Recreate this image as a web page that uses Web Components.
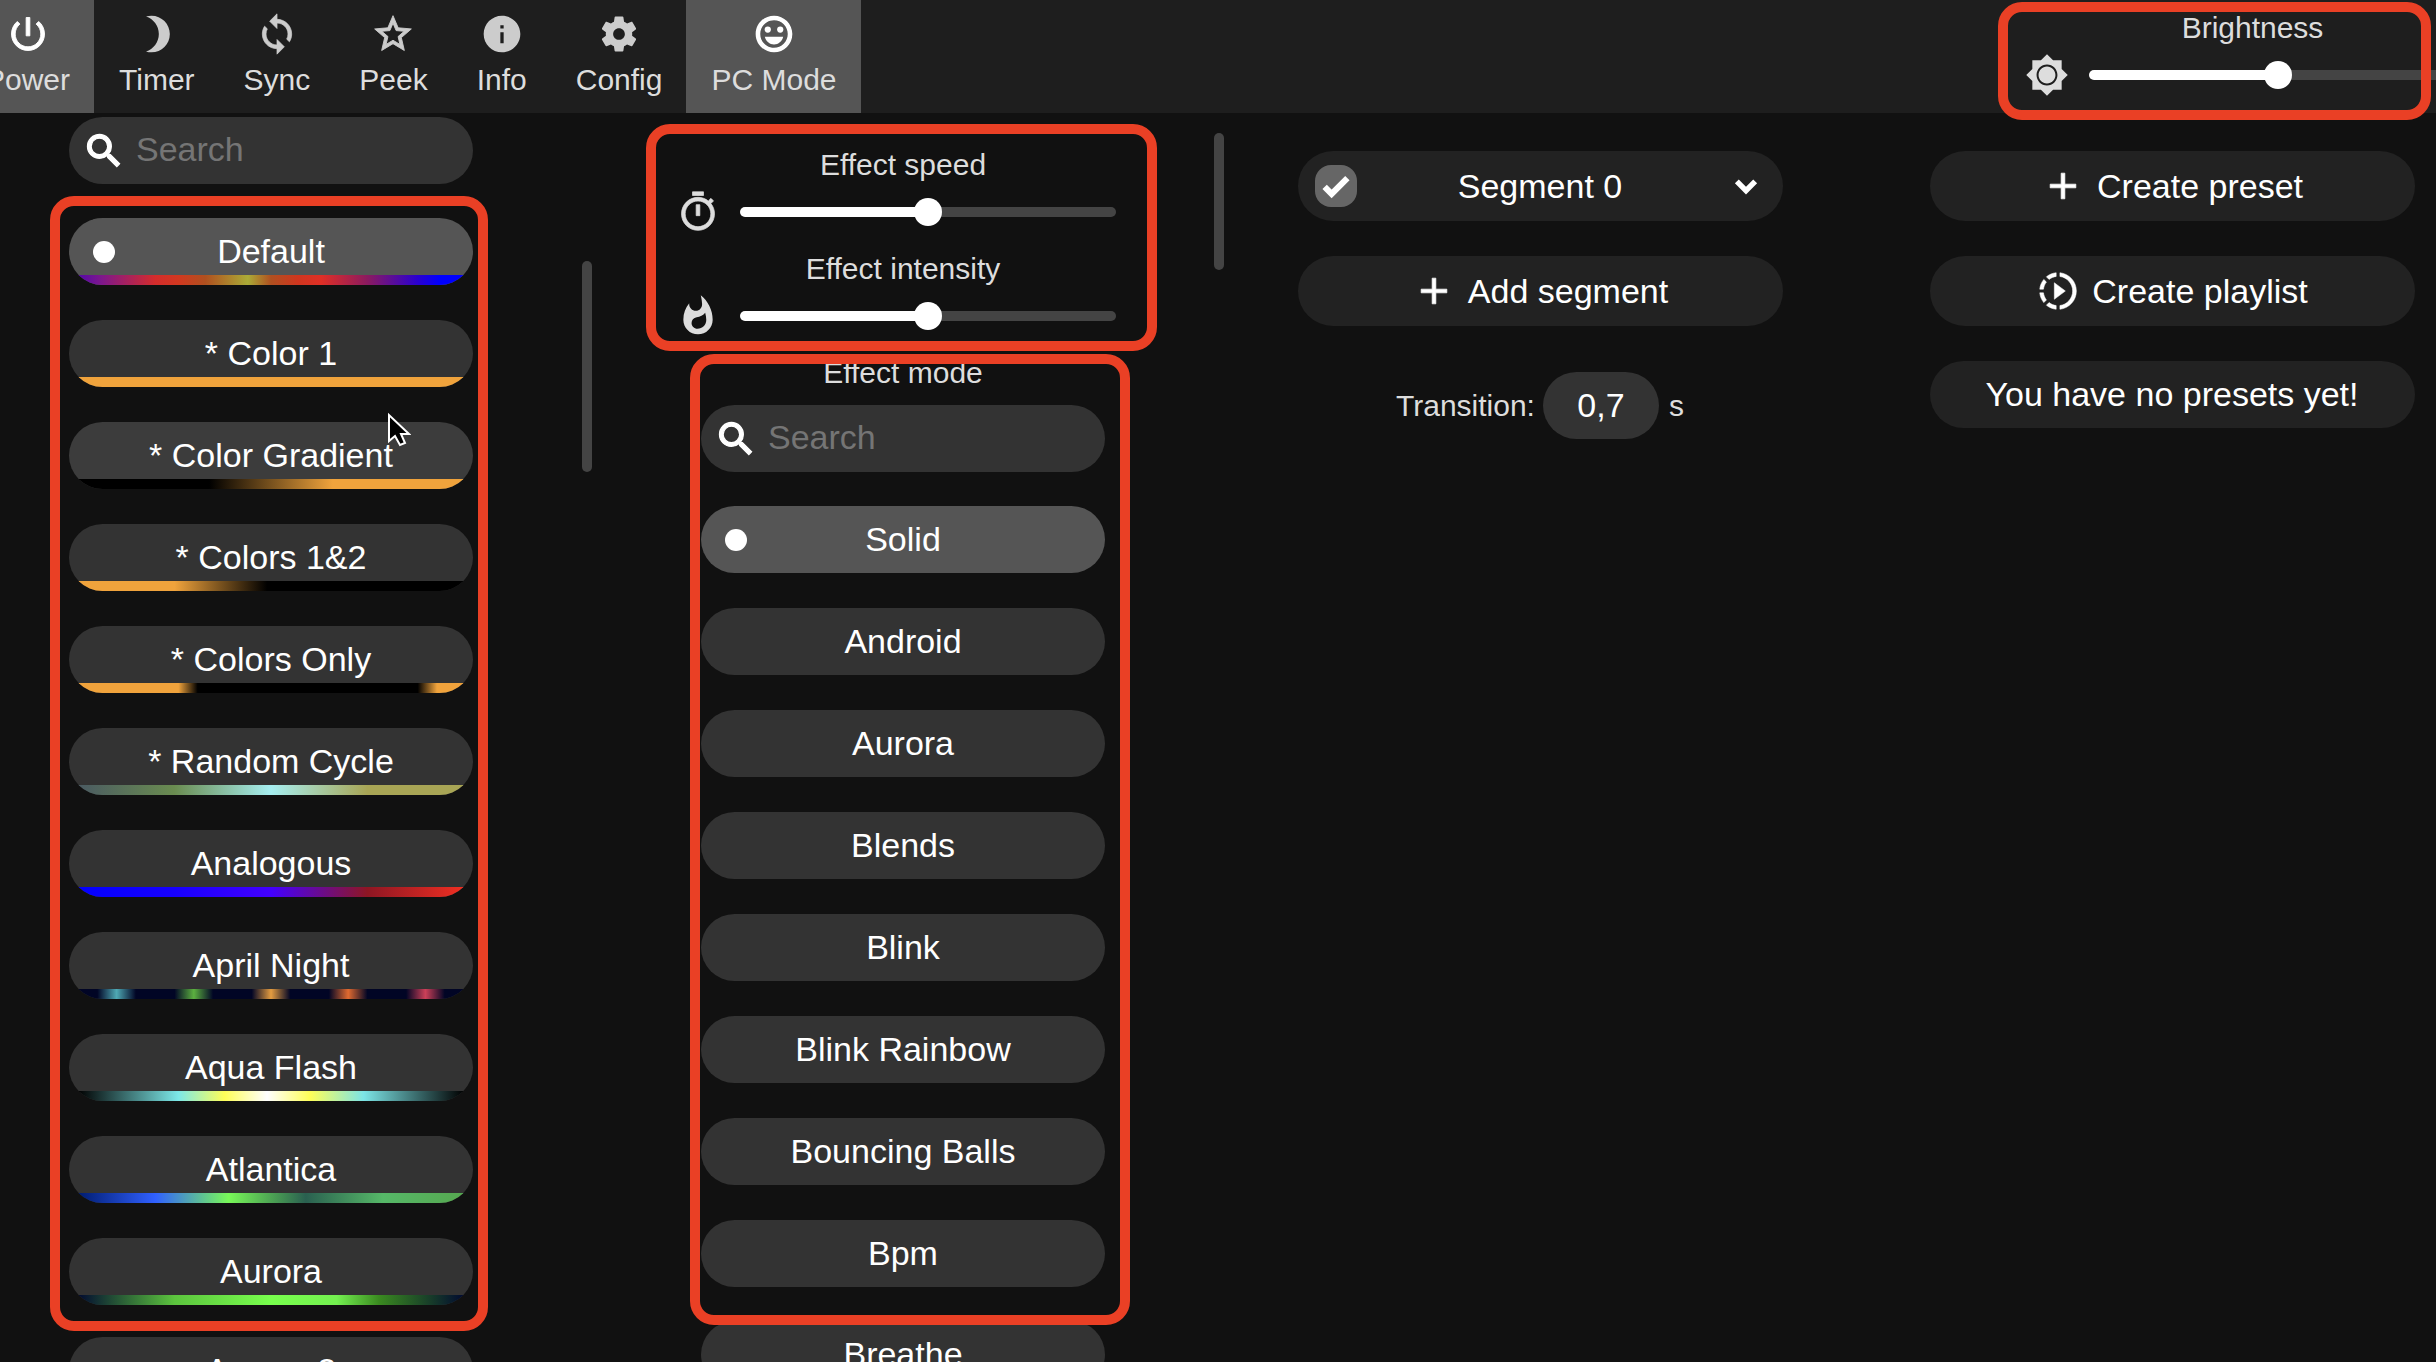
<!DOCTYPE html>
<html lang="en">
<head>
<meta charset="utf-8">
<title>WLED</title>
<style>
  html, body { height: 100%; }
  body {
    margin: 0;
    overflow: hidden;
    background: #111;
    color: #ddd;
    font: 30px/34px "Liberation Sans", Arial, sans-serif;
  }
</style>
</head>
<body>
<led-app></led-app>

<script>
const ICONS = {
  power: '<path d="M13 3h-2v10h2V3zm4.83 2.17l-1.42 1.42C17.99 7.86 19 9.81 19 12c0 3.87-3.13 7-7 7s-7-3.13-7-7c0-2.19 1.01-4.14 2.58-5.42L6.17 5.17C4.23 6.82 3 9.26 3 12c0 4.97 4.03 9 9 9s9-4.03 9-9c0-2.74-1.23-5.18-3.17-6.83z" stroke="currentColor" stroke-width=".5"/>',
  timer: '<path d="M9 2c-1.05 0-2.05.16-3 .46 4.06 1.27 7 5.06 7 9.54 0 4.48-2.94 8.27-7 9.54.95.3 1.95.46 3 .46 5.52 0 10-4.48 10-10S14.52 2 9 2z"/>',
  sync: '<path d="M12 4V1L8 5l4 4V6c3.31 0 6 2.69 6 6 0 1.01-.25 1.97-.7 2.8l1.46 1.46C19.54 15.03 20 13.57 20 12c0-4.42-3.58-8-8-8zm0 14c-3.31 0-6-2.69-6-6 0-1.01.25-1.97.7-2.8L5.24 7.74C4.46 8.97 4 10.43 4 12c0 4.42 3.58 8 8 8v3l4-4-4-4v3z" stroke="currentColor" stroke-width=".4"/>',
  peek: '<path d="M22 9.24l-7.19-.62L12 2 9.19 8.63 2 9.24l5.46 4.73L5.82 21 12 17.27 18.18 21l-1.63-7.03L22 9.24zM12 15.4l-3.76 2.27 1-4.28-3.32-2.88 4.38-.38L12 6.1l1.71 4.04 4.38.38-3.32 2.88 1 4.28L12 15.4z" stroke="currentColor" stroke-width=".5"/>',
  info: '<path d="M12 2C6.48 2 2 6.48 2 12s4.48 10 10 10 10-4.48 10-10S17.52 2 12 2zm.9 15h-1.800v-6h1.800v6zm0-8h-1.800V7.200h1.800V9z"/>',
  config: '<path d="M19.14 12.94c.04-.3.06-.61.06-.94 0-.32-.02-.64-.07-.94l2.03-1.58c.18-.14.23-.41.12-.61l-1.92-3.32c-.12-.22-.37-.29-.59-.22l-2.39.96c-.5-.38-1.03-.7-1.62-.94l-.36-2.54c-.04-.24-.24-.41-.48-.41h-3.84c-.24 0-.43.17-.47.41l-.36 2.54c-.59.24-1.13.57-1.62.94l-2.39-.96c-.22-.08-.47 0-.59.22L2.74 8.87c-.12.21-.08.47.12.61l2.03 1.58c-.05.3-.09.63-.09.94s.02.64.07.94l-2.03 1.58c-.18.14-.23.41-.12.61l1.92 3.32c.12.22.37.29.59.22l2.39-.96c.5.38 1.03.7 1.62.94l.36 2.54c.05.24.24.41.48.41h3.84c.24 0 .44-.17.47-.41l.36-2.54c.59-.24 1.13-.56 1.62-.94l2.39.96c.22.08.47 0 .59-.22l1.92-3.32c.12-.22.07-.47-.12-.61l-2.01-1.58zM12 15.2c-1.77 0-3.2-1.43-3.2-3.2s1.43-3.2 3.2-3.2 3.2 1.43 3.2 3.2-1.43 3.2-3.2 3.2z"/>',
  smile: '<path d="M12 2C6.47 2 2 6.47 2 12s4.47 10 10 10 10-4.48 10-10S17.52 2 12 2zm0 17.500c-4.140 0-7.500-3.360-7.500-7.500s3.360-7.500 7.500-7.500 7.500 3.360 7.500 7.500-3.360 7.500-7.500 7.500z"/><circle cx="15.400" cy="9.600" r="1.700"/><circle cx="8.600" cy="9.600" r="1.700"/><path d="M7 13.500h10c-.6 2.500-2.600 4.200-5 4.200s-4.400-1.700-5-4.200z"/>',
  brightness: '<path d="M20 8.69V4h-4.690L12 .69 8.690 4H4v4.690L.69 12 4 15.310V20h4.690L12 23.310 15.310 20H20v-4.690L23.310 12 20 8.690zM12 17.700c-3.150 0-5.700-2.550-5.700-5.700s2.550-5.700 5.700-5.700 5.700 2.550 5.700 5.700-2.550 5.700-5.700 5.700zm0-10.300c-2.540 0-4.600 2.060-4.600 4.600s2.060 4.600 4.600 4.600 4.600-2.060 4.600-4.600-2.060-4.600-4.600-4.600z"/>',
  speed: '<path d="M15 1H9v2h6V1zm-4 13h2V8h-2v6zm8.030-6.610l1.420-1.420c-.43-.51-.9-.99-1.410-1.410l-1.420 1.420C16.070 4.740 14.120 4 12 4c-4.970 0-9 4.030-9 9s4.020 9 9 9 9-4.030 9-9c0-2.120-.74-4.070-1.970-5.610zM12 20c-3.870 0-7-3.130-7-7s3.130-7 7-7 7 3.130 7 7-3.130 7-7 7z" stroke="currentColor" stroke-width=".4"/>',
  fire: '<path d="M13.500.67s.74 2.650.74 4.800c0 2.060-1.350 3.730-3.410 3.730-2.070 0-3.630-1.670-3.630-3.730l.03-.36C5.210 7.510 4 10.620 4 14c0 4.420 3.580 8 8 8s8-3.580 8-8C20 8.610 17.410 3.800 13.500.67zM11.710 19c-1.780 0-3.220-1.400-3.220-3.140 0-1.620 1.050-2.760 2.810-3.120 1.770-.36 3.600-1.210 4.620-2.580.39 1.290.59 2.650.59 4.040 0 2.650-2.150 4.800-4.800 4.800z"/>',
  search: '<path d="M15.500 14h-.79l-.28-.27C15.410 12.590 16 11.110 16 9.500 16 5.910 13.090 3 9.500 3S3 5.910 3 9.500 5.910 16 9.500 16c1.610 0 3.090-.59 4.230-1.570l.27.28v.79l5 4.990L20.490 19l-4.990-5zm-6 0C7.010 14 5 11.990 5 9.500S7.010 5 9.500 5 14 7.010 14 9.500 11.990 14 9.500 14z" stroke="currentColor" stroke-width=".7"/>',
  plus: '<path d="M19 13h-6v6h-2v-6H5v-2h6V5h2v6h6v2z" stroke="currentColor" stroke-width=".4"/>',
  playlist: '<path d="M13.050 9.790L10 7.500v9l3.050-2.290L16 12l-2.950-2.210zM11 4.070V2.050c-2.010.2-3.840 1-5.320 2.210L7.100 5.690c1.110-.86 2.440-1.440 3.900-1.620zM5.690 7.100L4.260 5.680C3.050 7.160 2.250 8.990 2.050 11h2.020c.18-1.460.76-2.790 1.620-3.900zM4.070 13H2.050c.2 2.010 1 3.840 2.210 5.320l1.430-1.430c-.86-1.100-1.440-2.430-1.620-3.890zm1.610 6.740C7.160 20.950 9 21.750 11 21.950v-2.020c-1.460-.18-2.790-.76-3.900-1.620l-1.420 1.430zM22 12c0 5.160-3.920 9.420-8.950 9.950v-2.020C16.970 19.410 20 16.050 20 12s-3.030-7.410-6.950-7.930V2.050C18.080 2.580 22 6.840 22 12z" stroke="currentColor" stroke-width=".3"/>',
  check: '<path d="M5.500 12.500l4 4L18.500 7.500" fill="none" stroke="currentColor" stroke-width="3.500"/>',
  chevron: '<path d="M7 9.500l5 5 5-5" fill="none" stroke="currentColor" stroke-width="3"/>'
};

const ORANGE = "#f0a33c";
const NIGHT = "#010525";

const PALETTES = [
  ["Default", "#5508a8, #7d178c 6%, #d42c2c 20%, #d23820 26%, #b0501f 33%, #abab37 44%, #b05020 50%, #d0361f 57%, #e02f26 63%, #8b1a60 75%, #2a00d0 88%, #00f 94%"],
  ["* Color 1", `${ORANGE}, ${ORANGE}`],
  ["* Color Gradient", `#000 34%, ${ORANGE} 66%`],
  ["* Colors 1&2", `${ORANGE} 25%, #000 49%`],
  ["* Colors Only", `${ORANGE} 26%, #000 31%, #000 88%, ${ORANGE} 93%`],
  ["* Random Cycle", "#4a5a62, #6a8c50 25%, #a6eef0 50%, #a8a555 75%"],
  ["Analogous", "#0300ff, #1700ff 25%, #4300ff 50%, #8e1623 75%, #f02f22"],
  ["April Night", ["#4fa9b4", "#5cb040", "#e49c40", "#e06a30", "#cc4058"].map((c, i) => {
    const p = 10 + i * 20;
    return `${NIGHT} ${p - 5}%, ${c} ${p}%, ${NIGHT} ${p + 5}%`;
  }).join(", ")],
  ["Aqua Flash", "#000, #7ce8e8 26%, #ffff58 38%, #fff 49%, #ffff58 60%, #7ce4e6 74%, #000"],
  ["Atlantica", "#001c70, #3060ff 20%, #78f858 39%, #2a6050 59%, #56b868 79%, #56a850"],
  ["Aurora", "#010a30, #5cc43e 25%, #78ff4d 50%, #74f050 67%, #3a8a20 78%, #010a30"],
  ["Aurora 2", "#11b10d, #79c205 25%, #19ad79 50%, #fa4d7f 75%, #ab65dd"]
];

const EFFECTS = ["Solid", "Android", "Aurora", "Blends", "Blink", "Blink Rainbow", "Bouncing Balls", "Bpm", "Breathe"];

class LedElement extends HTMLElement {
  constructor() {
    super();
    this.attachShadow({ mode: "open" });
  }

  connectedCallback() {
    this.shadowRoot.innerHTML = this.template();
  }
}

class LedIcon extends LedElement {
  template() {
    return `
      <style>
        :host { display: block; flex: none; width: 44px; height: 44px; }
        svg { display: block; width: 100%; height: 100%; fill: currentColor; }
      </style>
      <svg viewBox="0 0 24 24" aria-hidden="true">${ICONS[this.getAttribute("name")]}</svg>
    `;
  }
}

// Button of the top bar: icon above its caption
class TabButton extends LedElement {
  template() {
    return `
      <style>
        :host { display: flex; }
        button {
          display: flex;
          flex-direction: column;
          align-items: center;
          gap: 7px;
          padding: 12px 24px 16px 25px;
          border: 0;
          background: none;
          color: #ddd;
          font: inherit;
          cursor: pointer;
        }
        led-icon { color: #ccc; }
        :host([active]) button { background: #555; }
        :host([active]) led-icon { color: #fff; }
      </style>
      <button type="button">
        <led-icon name="${this.getAttribute("icon")}"></led-icon>
        <span><slot></slot></span>
      </button>
    `;
  }
}

class LabeledSlider extends LedElement {
  template() {
    return `
      <style>
        :host { display: block; width: 455px; }
        label { display: block; margin-bottom: 8px; text-align: center; }
        .row { display: flex; align-items: center; gap: 20px; padding-right: 15px; }
        input {
          flex: 1;
          min-width: 0;
          height: 28px;
          margin: 0;
          appearance: none;
          background: none;
        }
        input::-webkit-slider-runnable-track {
          height: 10px;
          border-radius: 5px;
          background: linear-gradient(to right, #fff 50%, #444 50%);
        }
        input::-webkit-slider-thumb {
          appearance: none;
          width: 28px;
          height: 28px;
          margin-top: -9px;
          border-radius: 50%;
          background: #fff;
        }
      </style>
      <label for="range"><slot></slot></label>
      <div class="row">
        <led-icon name="${this.getAttribute("icon")}"></led-icon>
        <input id="range" type="range" min="0" max="255" value="128">
      </div>
    `;
  }
}

class SearchBox extends LedElement {
  template() {
    return `
      <style>
        :host { display: block; }
        label {
          display: flex;
          align-items: center;
          gap: 10px;
          height: 67px;
          padding: 0 24px 0 13px;
          box-sizing: border-box;
          border-radius: 34px;
          background: #333;
          color: #fff;
        }
        input {
          flex: 1;
          min-width: 0;
          padding: 0 0 3px;
          border: 0;
          outline: 0;
          background: none;
          color: #fff;
          font: 34px/40px "Liberation Sans", Arial, sans-serif;
        }
        input::placeholder { color: #757575; }
      </style>
      <label>
        <led-icon name="search"></led-icon>
        <input type="text" placeholder="Search" aria-label="Search">
      </label>
    `;
  }
}

// One entry of a palette or effect list
class ListItem extends LedElement {
  template() {
    const colors = this.getAttribute("colors");
    return `
      <style>
        :host { display: block; }
        button {
          display: block;
          position: relative;
          width: 100%;
          height: 67px;
          padding: 0 0 2px;
          border: 0;
          border-radius: 34px;
          overflow: hidden;
          background: #333;
          color: #fff;
          font: 34px/40px "Liberation Sans", Arial, sans-serif;
          cursor: pointer;
        }
        :host([hovered]) button { background: #3c3c3c; }
        :host([selected]) button { background: #555; }
        .dot {
          position: absolute;
          top: 23px;
          left: 24px;
          width: 22px;
          height: 22px;
          border-radius: 50%;
          background: #fff;
        }
        .preview {
          position: absolute;
          inset: auto 9px 0;
          height: 10px;
        }
      </style>
      <button type="button">
        ${this.hasAttribute("selected") ? '<span class="dot"></span>' : ""}
        <slot></slot>
        ${colors ? `<span class="preview" style="background: linear-gradient(to right, ${colors})"></span>` : ""}
      </button>
    `;
  }
}

class PillButton extends LedElement {
  template() {
    const icon = this.getAttribute("icon");
    return `
      <style>
        :host { display: block; }
        button {
          display: flex;
          align-items: center;
          justify-content: center;
          gap: 12px;
          width: 100%;
          height: 70px;
          padding: 0;
          border: 0;
          border-radius: 35px;
          background: #222;
          color: #fff;
          font: 34px/40px "Liberation Sans", Arial, sans-serif;
          cursor: pointer;
        }
      </style>
      <button type="button"><led-icon name="${icon}"></led-icon><span><slot></slot></span></button>
    `;
  }
}

class SegmentCard extends LedElement {
  template() {
    return `
      <style>
        :host {
          display: grid;
          grid-template-columns: 42px 1fr 42px;
          align-items: center;
          height: 70px;
          padding: 0 17px;
          box-sizing: border-box;
          border-radius: 35px;
          background: #222;
          color: #fff;
          font-size: 34px;
          line-height: 40px;
        }
        .tick { display: grid; }
        .tick > * { grid-area: 1 / 1; }
        .tick led-icon { width: 42px; height: 42px; pointer-events: none; }
        input {
          width: 42px;
          height: 42px;
          margin: 0;
          appearance: none;
          border-radius: 16px;
          background: #666;
        }
        .name { text-align: center; }
        button {
          padding: 0;
          border: 0;
          background: none;
          color: inherit;
          cursor: pointer;
        }
      </style>
      <span class="tick">
        <input id="on" type="checkbox" checked aria-label="Segment enabled">
        <led-icon name="check"></led-icon>
      </span>
      <label class="name" for="on"><slot></slot></label>
      <button type="button" aria-label="Expand segment"><led-icon name="chevron"></led-icon></button>
    `;
  }
}

class TransitionField extends LedElement {
  template() {
    return `
      <style>
        :host { display: flex; align-items: center; justify-content: center; }
        input {
          width: 116px;
          height: 67px;
          margin: 0 10px 0 8px;
          padding: 0;
          box-sizing: border-box;
          border: 0;
          border-radius: 34px;
          background: #333;
          color: #fff;
          font: 34px/40px "Liberation Sans", Arial, sans-serif;
          text-align: center;
        }
      </style>
      <label for="time">Transition:</label>
      <input id="time" type="text" inputmode="decimal" value="0,7">
      <span>s</span>
    `;
  }
}

// Rounded red outline around whatever is slotted; --frame sets how far it reaches out
class RedFrame extends LedElement {
  template() {
    return `
      <style>
        :host { display: block; position: relative; }
        .outline {
          position: absolute;
          z-index: 2;
          inset: var(--frame);
          border: 10px solid #ea4025;
          border-radius: 24px;
          pointer-events: none;
        }
      </style>
      <slot></slot>
      <div class="outline"></div>
    `;
  }
}

class AppColumn extends LedElement {
  template() {
    return `
      <style>
        :host { display: flex; min-width: 0; min-height: 0; overflow: hidden; }
        .content { flex: 1; min-width: 0; }
        .rail { flex: none; width: 10px; }
        .thumb {
          height: var(--thumb-size);
          margin-top: var(--thumb-top);
          border-radius: 5px;
          background: #444;
        }
      </style>
      <div class="content"><slot></slot></div>
      ${this.hasAttribute("scrollbar") ? '<div class="rail"><div class="thumb"></div></div>' : ""}
    `;
  }
}

class LedApp extends LedElement {
  template() {
    const palette = ([name, colors], i) => `
      <list-item colors="${colors}" ${i === 0 ? "selected" : ""} ${i === 2 ? "hovered" : ""}>${name.replace("&", "&amp;")}</list-item>`;
    const effect = (name, i) => `<list-item ${i === 0 ? "selected" : ""}>${name}</list-item>`;

    return `
      <style>
        /* wider than the window, panned a little to the right */
        :host {
          display: grid;
          grid-template-rows: auto minmax(0, 1fr);
          height: 100vh;
          margin: 0 -52px 0 -40px;
        }
        header {
          display: flex;
          justify-content: space-between;
          position: relative;
          z-index: 3;
          background: #1e1e1e;
        }
        nav { display: flex; }
        .bright { --frame: -9px 49px -23px -27px; align-self: start; margin: 11px 8px 0 0; }
        main { display: grid; grid-template-columns: repeat(4, minmax(0, 1fr)); }

        .palettes { --thumb-top: 148px; --thumb-size: 211px; }
        .effects { --thumb-top: 20px; --thumb-size: 137px; }
        .list { width: 404px; margin: 0 auto; }
        .palettes .list { padding-top: 4px; }
        .items { display: grid; gap: 35px; }
        search-box { margin-bottom: 34px; }
        .palettes red-frame { --frame: -22px -15px -26px -19px; margin-bottom: 32px; }
        .sliders { --frame: -24px -26px -13px -30px; width: 455px; margin: 35px auto 18px; }
        labeled-slider + labeled-slider { margin-top: 18px; }
        .modes { --frame: -2px -25px -38px -11px; margin-bottom: 34px; }
        .title { margin: 0 0 15px; font: inherit; text-align: center; }

        .cards { display: grid; gap: 35px; width: 485px; margin: 38px auto 0; }
        transition-field { margin-top: 11px; }
        .empty {
          margin: 0;
          border-radius: 34px;
          background: #222;
          color: #fff;
          font-size: 34px;
          line-height: 67px;
          text-align: center;
        }
        .pointer {
          position: absolute;
          z-index: 4;
          top: 412px;
          left: 387px;
          width: 24px;
          height: 36px;
        }
      </style>

      <header>
        <nav>
          <tab-button icon="power" active>Power</tab-button>
          <tab-button icon="timer">Timer</tab-button>
          <tab-button icon="sync">Sync</tab-button>
          <tab-button icon="peek">Peek</tab-button>
          <tab-button icon="info">Info</tab-button>
          <tab-button icon="config">Config</tab-button>
          <tab-button icon="smile" active>PC Mode</tab-button>
        </nav>
        <red-frame class="bright">
          <labeled-slider icon="brightness">Brightness</labeled-slider>
        </red-frame>
      </header>

      <main>
        <app-column class="palettes" scrollbar>
          <div class="list">
            <search-box></search-box>
            <red-frame>
              <div class="items">${PALETTES.slice(0, 11).map(palette).join("")}</div>
            </red-frame>
            <list-item colors="${PALETTES[11][1]}">${PALETTES[11][0]}</list-item>
          </div>
        </app-column>

        <app-column class="effects" scrollbar>
          <red-frame class="sliders">
            <labeled-slider icon="speed">Effect speed</labeled-slider>
            <labeled-slider icon="fire">Effect intensity</labeled-slider>
          </red-frame>
          <div class="list">
            <red-frame class="modes">
              <h2 class="title">Effect mode</h2>
              <search-box></search-box>
              <div class="items">${EFFECTS.slice(0, 8).map(effect).join("")}</div>
            </red-frame>
            <list-item>${EFFECTS[8]}</list-item>
          </div>
        </app-column>

        <app-column>
          <div class="cards">
            <segment-card>Segment 0</segment-card>
            <pill-button icon="plus">Add segment</pill-button>
            <transition-field></transition-field>
          </div>
        </app-column>

        <app-column>
          <div class="cards">
            <pill-button icon="plus">Create preset</pill-button>
            <pill-button icon="playlist">Create playlist</pill-button>
            <p class="empty">You have no presets yet!</p>
          </div>
        </app-column>
      </main>

      <svg class="pointer" viewBox="0 0 24 36" aria-hidden="true">
        <path d="M2 3v26l6-5 5 9 5-2-4-9h8z" fill="#000" stroke="#fff" stroke-width="2"/>
      </svg>
    `;
  }
}

customElements.define("led-icon", LedIcon);
customElements.define("tab-button", TabButton);
customElements.define("labeled-slider", LabeledSlider);
customElements.define("search-box", SearchBox);
customElements.define("list-item", ListItem);
customElements.define("pill-button", PillButton);
customElements.define("segment-card", SegmentCard);
customElements.define("transition-field", TransitionField);
customElements.define("red-frame", RedFrame);
customElements.define("app-column", AppColumn);
customElements.define("led-app", LedApp);
</script>
</body>
</html>
